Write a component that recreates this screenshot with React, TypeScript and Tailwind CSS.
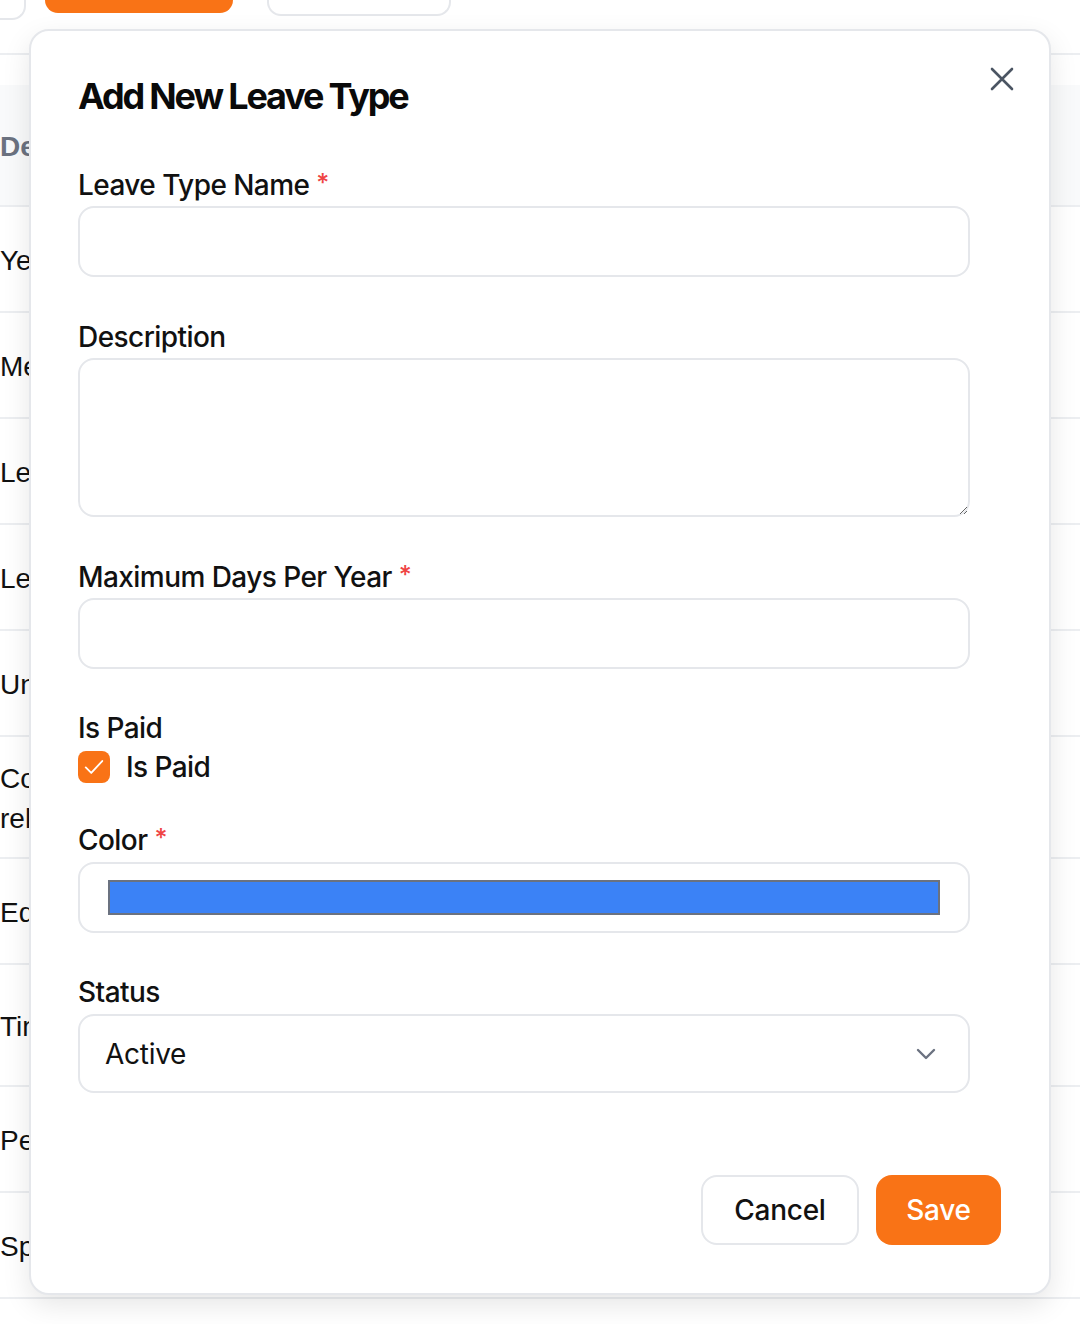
import React from 'react'
import { ChevronDown } from 'lucide-react'

const rows = [
  { name: 'Yearly Leave', h: 'h-[106px]' },
  { name: 'Medical Leave', h: 'h-[106px]' },
  { name: 'Leave Without Pay', h: 'h-[106px]' },
  { name: 'Leave In Lieu', h: 'h-[106px]' },
  { name: 'Unpaid Leave', h: 'h-[106px]' },
  { name: 'Compassionate', sub: 'related', h: 'h-[122px]' },
  { name: 'Education Leave', h: 'h-[106px]' },
  { name: 'Time Off', h: 'h-[122px]' },
  { name: 'Personal Leave', h: 'h-[106px]' },
  { name: 'Special Leave', h: 'h-[106px]' },
]

const Label = ({ text, required }: { text: string; required?: boolean }) => (
  <div className="flex items-start h-[40px] text-[28px] leading-[40px] font-medium tracking-[-0.02em] text-[#111111]">
    <span>{text}</span>
    {required && <span className="ml-[7px] mt-[3px] text-[25px] leading-[30px] text-[#ef4444]">*</span>}
  </div>
)

const AddLeaveTypeModal = () => {
  return (
    <div className="absolute left-[29px] top-[29px] w-[1022px] h-[1266px] bg-white border-2 border-[#e5e7eb] rounded-[20px] shadow-[0_10px_28px_rgba(0,0,0,0.10)] font-['Inter',sans-serif] text-[#111111]">
      <button className="absolute right-[35px] top-[36px] text-[#4b5563]">
        <svg width="24" height="24" viewBox="0 0 24 24" fill="none" stroke="currentColor" strokeWidth="2.6" strokeLinecap="round">
          <path d="M2 2L22 22M22 2L2 22" />
        </svg>
      </button>
      <div className="pl-[47px] pr-[48px] pt-[41px]">
        <h2 className="h-[48px] text-[36px] leading-[48px] font-bold tracking-[-0.06em] text-[#0a0a0a]">
          Add New Leave Type
        </h2>

        <div className="w-[892px] mt-[45px]">
          <Label text="Leave Type Name" required />
          <input className="mt-[1px] block w-full h-[71px] border-2 border-[#e5e7eb] rounded-[16px] outline-none" />

          <div className="mt-[40px]">
            <Label text="Description" />
          </div>
          <textarea className="mt-[1px] block w-full h-[159px] border-2 border-[#e5e7eb] rounded-[16px] outline-none" />

          <div className="mt-[40px]">
            <Label text="Maximum Days Per Year" required />
          </div>
          <input className="mt-[1px] block w-full h-[71px] border-2 border-[#e5e7eb] rounded-[16px] outline-none" />

          <div className="mt-[39px]">
            <Label text="Is Paid" />
          </div>
          <div className="mt-[2px] flex items-center gap-[16px] h-[34px]">
            <span className="flex items-center justify-center w-[32px] h-[32px] rounded-[8px] bg-[#f97316] text-white">
              <svg width="22" height="22" viewBox="0 0 24 24" fill="none" stroke="currentColor" strokeWidth="2" strokeLinecap="round" strokeLinejoin="round">
                <path d="M3 12.5l6 6L21 5.5" />
              </svg>
            </span>
            <span className="text-[28px] leading-[32px] font-medium tracking-[-0.02em]">Is Paid</span>
          </div>

          <div className="mt-[36px]">
            <Label text="Color" required />
          </div>
          <div className="mt-[2px] h-[71px] border-2 border-[#e5e7eb] rounded-[16px] px-[28px] py-[16px]">
            <div className="h-full bg-[#3b82f6] border-2 border-[#6b7280]" />
          </div>

          <div className="mt-[39px]">
            <Label text="Status" />
          </div>
          <div className="mt-[2px] flex items-center justify-between h-[79px] border-2 border-[#e5e7eb] rounded-[16px] pl-[25px] pr-[26px]">
            <span className="text-[28px] leading-[40px] tracking-[-0.01em]">Active</span>
            <ChevronDown size={32} strokeWidth={1.8} className="text-[#6b7280]" />
          </div>
        </div>

        <div className="mt-[82px] flex justify-end gap-[17px]">
          <button className="w-[158px] h-[70px] border-2 border-[#e5e7eb] rounded-[16px] text-[28px] font-medium tracking-[-0.01em] text-[#111111] bg-white">
            Cancel
          </button>
          <button className="w-[125px] h-[70px] rounded-[16px] text-[28px] font-medium tracking-[-0.01em] text-white bg-[#f97316]">
            Save
          </button>
        </div>
      </div>
    </div>
  )
}

export default function App() {
  return (
    <div className="relative w-[1080px] h-[1324px] overflow-hidden bg-white font-['Liberation_Sans',Arial,sans-serif]">
      {/* page behind the dialog */}
      <div className="h-[55px] border-b-2 border-[#eceef1]">
        <div className="flex items-start h-[20px]">
          <div className="w-[26px] h-[20px] border-2 border-t-0 border-l-0 border-[#e5e7eb] rounded-br-[14px]" />
          <div className="ml-[19px] w-[188px] h-[13px] bg-[#f97316] rounded-b-[14px]" />
          <div className="ml-[34px] w-[184px] h-[16px] border-2 border-t-0 border-[#e5e7eb] rounded-b-[14px]" />
        </div>
      </div>
      <div className="mt-[30px] h-[122px] pt-[4px] bg-[#f9fafb] border-b-2 border-[#eceef1] flex items-center">
        <span className="w-[30px] overflow-hidden whitespace-nowrap text-[28px] font-bold text-[#6b7280]">Description</span>
      </div>
      {rows.map((r) => (
        <div key={r.name} className={`${r.h} pt-[3px] border-b-2 border-[#eceef1] flex flex-col justify-center text-[28px] leading-[40px] text-[#111111]`}>
          <span className="w-[30px] overflow-hidden whitespace-nowrap">{r.name}</span>
          {r.sub && <span className="w-[30px] overflow-hidden whitespace-nowrap">{r.sub}</span>}
        </div>
      ))}

      <AddLeaveTypeModal />
    </div>
  )
}
